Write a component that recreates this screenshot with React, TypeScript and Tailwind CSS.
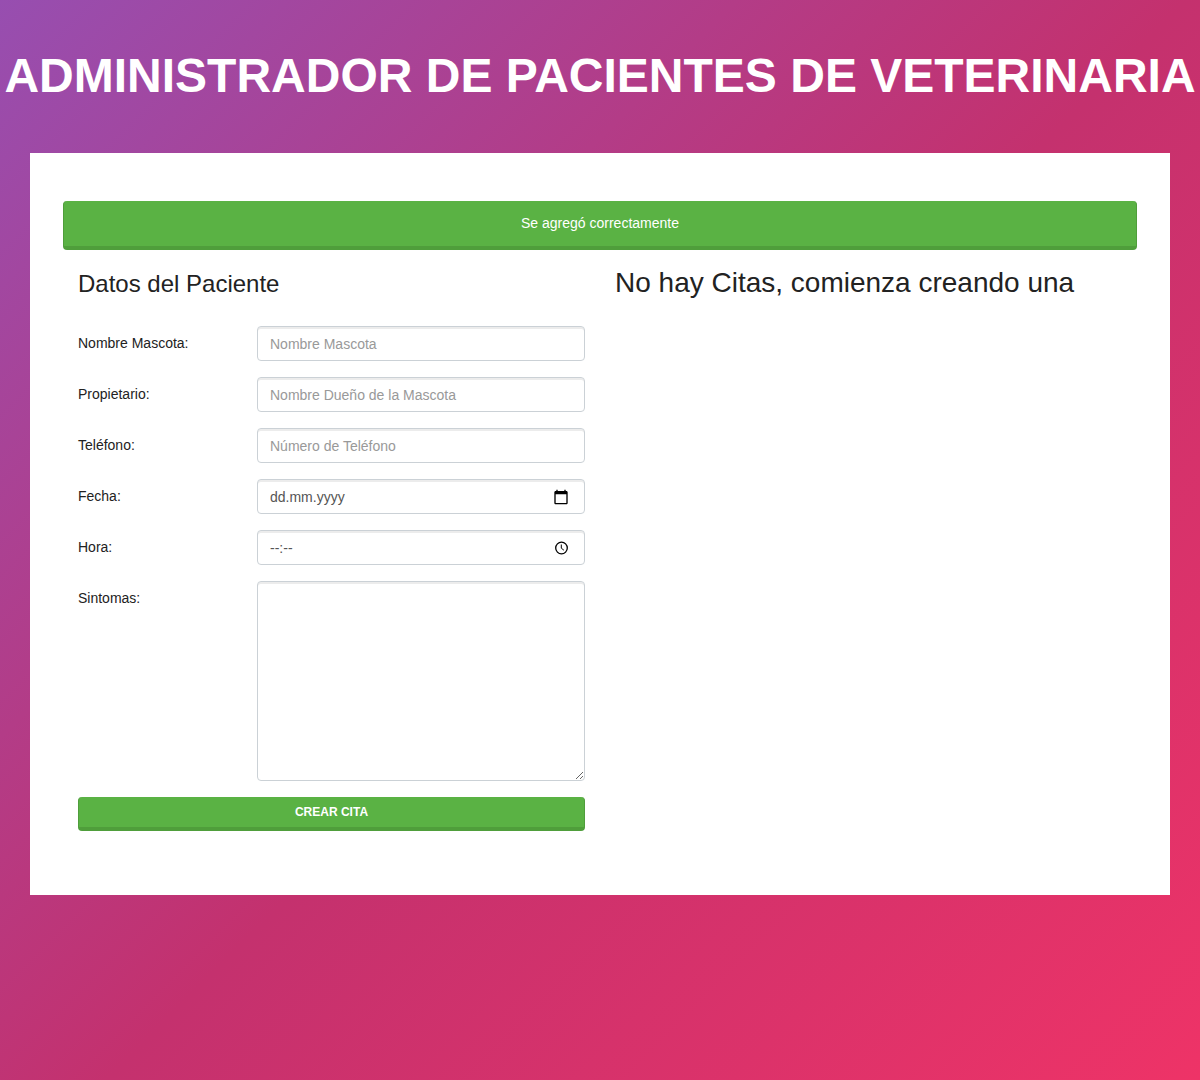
import { useState, type ReactNode } from 'react';

const field =
  'w-full rounded border border-[#cbd1d6] bg-white px-3 text-sm text-[#555] placeholder:text-[#999] shadow-[inset_0_2px_0_rgba(0,0,0,0.075)] focus:outline-none focus:border-[#66afe9]';

const green = 'rounded border-x border-b-4 border-[#4f9e3b] bg-[#5ab244] text-white';

function Row({ id, label, children }: { id: string; label: string; children: ReactNode }) {
  return (
    <div className="mb-4 flex items-start">
      <label htmlFor={id} className="w-1/3 shrink-0 py-[7px] text-sm text-[#222]">
        {label}
      </label>
      <div className="min-w-0 flex-1 pl-[10px]">{children}</div>
    </div>
  );
}

function CalendarIcon() {
  return (
    <svg viewBox="0 0 24 24" className="size-4" fill="#000" aria-hidden="true">
      <path d="M20 3h-1V1h-2v2H7V1H5v2H4c-1.100 0-2 .9-2 2v16c0 1.100.9 2 2 2h16c1.100 0 2-.9 2-2V5c0-1.100-.9-2-2-2zm0 18H4V8h16v13z" />
    </svg>
  );
}

function ClockIcon() {
  return (
    <svg viewBox="0 0 16 16" className="size-4" fill="none" stroke="#000" strokeWidth="1.300" aria-hidden="true">
      <circle cx="8.500" cy="8" r="5.800" />
      <path d="M8.300 4.500V8.200L10.900 10.200" strokeWidth="1" />
    </svg>
  );
}

type PickerProps = {
  id: string;
  placeholder: string;
  value: string;
  onChange: (value: string) => void;
  action: string;
  icon: ReactNode;
};

function PickerField({ id, placeholder, value, onChange, action, icon }: PickerProps) {
  return (
    <div className={`${field} flex h-[35px] items-center pr-[15px]`}>
      <input
        id={id}
        type="text"
        placeholder={placeholder}
        value={value}
        onChange={(e) => onChange(e.target.value)}
        className="min-w-0 flex-1 bg-transparent placeholder:text-[#555] focus:outline-none"
      />
      <button type="button" aria-label={action}>
        {icon}
      </button>
    </div>
  );
}

export default function App() {
  const [fecha, setFecha] = useState('');
  const [hora, setHora] = useState('');

  return (
    <div className="min-h-screen overflow-hidden bg-[linear-gradient(135deg,#974eb0_0%,#c4316e_52%,#ee3367_100%)] pb-8 font-['Liberation_Sans',Arial,sans-serif] text-[#222]">
      <h1 className="pt-[47px] pb-[49px] text-center text-5xl leading-[57px] font-bold whitespace-nowrap text-white uppercase">
        Administrador de Pacientes de Veterinaria
      </h1>
      <main className="mx-[30px] bg-white px-[33px] pt-12 pb-16">
        <p role="status" className={`${green} pt-3 pb-[13px] text-center text-sm`}>
          Se agregó correctamente
        </p>
        <div className="grid grid-cols-2">
          <form className="px-[15px] pt-5" onSubmit={(e) => e.preventDefault()}>
            <h2 className="mb-7 text-2xl leading-7">Datos del Paciente</h2>
            <Row id="mascota" label="Nombre Mascota:">
              <input id="mascota" type="text" placeholder="Nombre Mascota" className={`${field} block h-[35px]`} />
            </Row>
            <Row id="propietario" label="Propietario:">
              <input id="propietario" type="text" placeholder="Nombre Dueño de la Mascota" className={`${field} block h-[35px]`} />
            </Row>
            <Row id="telefono" label="Teléfono:">
              <input id="telefono" type="tel" placeholder="Número de Teléfono" className={`${field} block h-[35px]`} />
            </Row>
            <Row id="fecha" label="Fecha:">
              <PickerField id="fecha" placeholder="dd.mm.yyyy" value={fecha} onChange={setFecha} action="Abrir calendario" icon={<CalendarIcon />} />
            </Row>
            <Row id="hora" label="Hora:">
              <PickerField id="hora" placeholder="--:--" value={hora} onChange={setHora} action="Elegir hora" icon={<ClockIcon />} />
            </Row>
            <Row id="sintomas" label="Sintomas:">
              <textarea id="sintomas" className={`${field} block h-[200px] resize py-2`} />
            </Row>
            <button type="submit" className={`${green} block w-full py-[7px] text-xs font-bold uppercase`}>
              Crear Cita
            </button>
          </form>
          <section className="px-[15px] pt-4">
            <h2 className="text-[28px] leading-[34px]">No hay Citas, comienza creando una</h2>
          </section>
        </div>
      </main>
    </div>
  );
}
